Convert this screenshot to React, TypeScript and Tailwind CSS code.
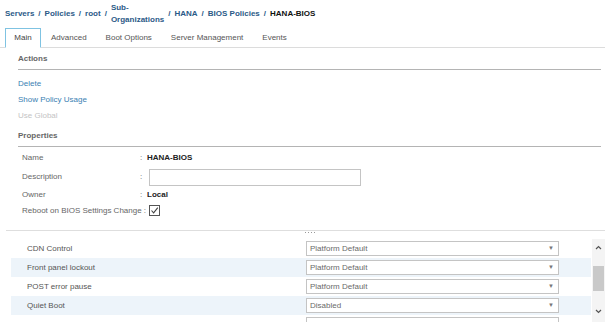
import React from "react";

const Sep = () => <span className="mx-[4px] text-[#2b5a87]">/</span>;

function Select({ value }: { value: string }) {
  return (
    <div className="ml-[279px] flex h-[15px] w-[253px] items-center justify-between border border-[#c4c4c4] bg-white pl-[3px] pr-[4px] text-[8px] text-[#6a6a6a]">
      <span>{value}</span>
      {value ? <span className="text-[6px] text-[#777]">▼</span> : null}
    </div>
  );
}

export default function App() {
  const rows = [
    { label: "CDN Control", value: "Platform Default" },
    { label: "Front panel lockout", value: "Platform Default" },
    { label: "POST error pause", value: "Platform Default" },
    { label: "Quiet Boot", value: "Disabled" },
    { label: "", value: "" },
  ];
  return (
    <div
      className="relative h-[322px] w-[605px] overflow-hidden bg-white text-[#5a5a5a]"
      style={{ fontFamily: '"Liberation Sans", Arial, sans-serif' }}
    >
      {/* breadcrumb */}
      <div className="flex h-[28px] items-center pl-[5px] text-[8px] font-bold text-[#2b5a87]">
        <span>Servers</span>
        <Sep />
        <span>Policies</span>
        <Sep />
        <span>root</span>
        <Sep />
        <span className="flex flex-col leading-[12px]">
          <span>Sub-</span>
          <span>Organizations</span>
        </span>
        <Sep />
        <span>HANA</span>
        <Sep />
        <span>BIOS Policies</span>
        <Sep />
        <span className="text-[#111]">HANA-BIOS</span>
      </div>

      {/* tabs */}
      <div className="flex h-[20px] items-stretch border-b border-[#dcdcdc] pl-[5px] text-[8px] text-[#555]">
        <div className="-mb-px flex w-[36px] items-center justify-center border border-b-white border-[#7fc3e2] bg-white text-[#444]">
          Main
        </div>
        <div className="ml-[10px] flex items-center">Advanced</div>
        <div className="ml-[19px] flex items-center">Boot Options</div>
        <div className="ml-[19px] flex items-center">Server Management</div>
        <div className="ml-[19px] flex items-center">Events</div>
      </div>

      {/* actions */}
      <div className="ml-[18px] mr-[4px] flex h-[22px] items-center border-b border-[#b4b4b4] text-[8px] font-bold text-[#666]">
        Actions
      </div>
      <div className="ml-[18px] pt-[6px] text-[8px]">
        <div className="flex h-[16px] items-center text-[#3b7fb3]">Delete</div>
        <div className="flex h-[16px] items-center text-[#3b7fb3]">Show Policy Usage</div>
        <div className="flex h-[16px] items-center text-[#c4c4c4]">Use Global</div>
      </div>
      <div className="ml-[18px] mr-[4px] mt-px flex h-[22px] items-center border-b border-[#b4b4b4] text-[8px] font-bold text-[#666]">
        Properties
      </div>

      {/* properties */}
      <div className="ml-[22px] pt-[2px] text-[8px] text-[#666]">
        <div className="flex h-[18px] items-center">
          <span className="w-[118px]">Name</span>
          <span className="w-[7px]">:</span>
          <span className="font-bold text-[#222]">HANA-BIOS</span>
        </div>
        <div className="flex h-[20px] items-center">
          <span className="w-[118px]">Description</span>
          <span className="w-[9px]">:</span>
          <div className="h-[17px] w-[212px] border border-[#c4c4c4] bg-white" />
        </div>
        <div className="flex h-[16px] items-center">
          <span className="w-[118px]">Owner</span>
          <span className="w-[7px]">:</span>
          <span className="font-bold text-[#222]">Local</span>
        </div>
        <div className="flex h-[15px] items-center">
          <span className="whitespace-nowrap">Reboot on BIOS Settings Change :</span>
          <svg className="ml-[3px]" width="11" height="11" viewBox="0 0 11 11">
            <rect x="0.5" y="0.5" width="10" height="10" fill="white" stroke="#555" strokeWidth="1" />
            <path d="M2.5 5.5 L4.6 7.8 L8.8 2.6" fill="none" stroke="#444" strokeWidth="1.1" />
          </svg>
        </div>
      </div>

      {/* splitter */}
      <div className="ml-[6px] mt-[12px] border-t border-[#dedede]">
        <div className="flex h-[4px] justify-center gap-[2px] pt-[1px] pl-[8px]">
          <span className="h-px w-px bg-[#999]" />
          <span className="h-px w-px bg-[#999]" />
          <span className="h-px w-px bg-[#999]" />
          <span className="h-px w-px bg-[#999]" />
        </div>
      </div>

      {/* table */}
      <div className="mt-[4px] flex">
        <div className="ml-[11px] w-[580px] text-[8px] text-[#555]">
          {rows.map((r, i) => (
            <div
              key={i}
              className={`flex h-[19px] items-center ${i % 2 === 1 ? "bg-[#edf4fa]" : "bg-white"}`}
            >
              <span className="w-[0px] whitespace-nowrap pl-[16px]">{r.label}</span>
              <Select value={r.value} />
            </div>
          ))}
        </div>
        <div className="ml-[1px] flex h-[83px] w-[13px] flex-col items-center bg-[#f4f4f4]">
          <svg className="mt-[6px]" width="7" height="5" viewBox="0 0 7 5">
            <path d="M1 4 L3.5 1.5 L6 4" fill="none" stroke="#555" strokeWidth="1.2" />
          </svg>
          <div className="mt-[16px] h-[25px] w-[11px] bg-[#c9c9c9]" />
          <svg className="mt-[18px]" width="7" height="5" viewBox="0 0 7 5">
            <path d="M1 1 L3.5 3.5 L6 1" fill="none" stroke="#555" strokeWidth="1.2" />
          </svg>
        </div>
      </div>
    </div>
  );
}
